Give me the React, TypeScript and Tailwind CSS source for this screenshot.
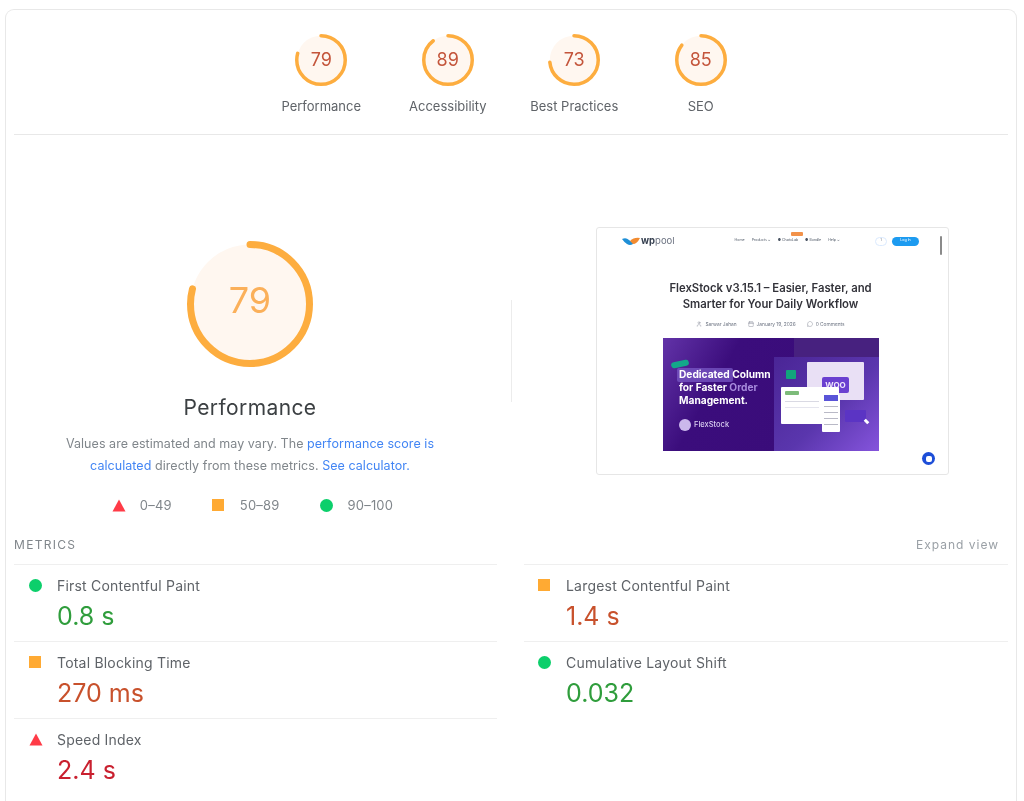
import React from 'react';
import { Calendar, MessageCircle, User } from 'lucide-react';

const scores = [
  { label: 'Performance', value: 79 },
  { label: 'Accessibility', value: 89 },
  { label: 'Best Practices', value: 73 },
  { label: 'SEO', value: 85 },
];

const leftMetrics = [
  { label: 'First Contentful Paint', value: '0.8 s', rating: 'good' },
  { label: 'Total Blocking Time', value: '270 ms', rating: 'average' },
  { label: 'Speed Index', value: '2.4 s', rating: 'poor' },
];

const rightMetrics = [
  { label: 'Largest Contentful Paint', value: '1.4 s', rating: 'average' },
  { label: 'Cumulative Layout Shift', value: '0.032', rating: 'good' },
];

function Gauge({ value, size, stroke }: { value: number; size: number; stroke: number }) {
  const r = (size - stroke) / 2;
  const c = 2 * Math.PI * r;
  return (
    <svg width={size} height={size} viewBox={`0 0 ${size} ${size}`} className="absolute inset-0 -rotate-90">
      <circle cx={size / 2} cy={size / 2} r={r} fill="#fff7f0" />
      <circle
        cx={size / 2}
        cy={size / 2}
        r={r}
        fill="none"
        stroke="#fdad3f"
        strokeWidth={stroke}
        strokeLinecap="round"
        strokeDasharray={`${(c * value) / 100} ${c}`}
      />
    </svg>
  );
}

function RatingIcon({ rating }: { rating: string }) {
  if (rating === 'good') return <span className="block h-[13px] w-[13px] rounded-full bg-[#0ccf6b]" />;
  if (rating === 'average') return <span className="block h-3 w-3 bg-[#ffaa33]" />;
  return (
    <svg width="14" height="13" viewBox="0 0 14 13" className="block">
      <path d="M7 0.5 L13.5 12.5 L0.5 12.5 Z" fill="#ff3b47" />
    </svg>
  );
}

function MetricRow({ label, value, rating, inset }: { label: string; value: string; rating: string; inset: string }) {
  const valueColor =
    rating === 'good' ? 'text-[#2f9d3c]' : rating === 'average' ? 'text-[#c8512c]' : 'text-[#c9202f]';
  return (
    <div className={`h-[77px] border-t border-[#efefef] ${inset}`}>
      <div className="flex h-[40px] items-center">
        <span className="flex w-[28px] shrink-0 items-center">
          <RatingIcon rating={rating} />
        </span>
        <span className="text-[14px] tracking-[0.2px] text-[#5f6368]">{label}</span>
      </div>
      <div className="pl-[28px]">
        <div className={`-mt-[4px] text-[25px] leading-[30px] ${valueColor}`}>{value}</div>
      </div>
    </div>
  );
}

function MiniPage() {
  return (
    <div className="relative h-[248px] w-[353px] overflow-hidden rounded-[3px] border border-[#e6e6e6] bg-white blur-[0.5px]">
      <div className="flex h-[26px] items-center pl-[25px] pr-[29px]">
        <svg width="18" height="9" viewBox="0 0 18 9">
          <path d="M0 2 Q4 0 7 3 Q10 6 13 2 L11 7 Q8 9 5 7 Q2 5 0 2Z" fill="#1f8fd6" />
          <path d="M8 4 Q12 0 18 1 Q15 7 11 7Z" fill="#f28b30" />
        </svg>
        <span className="ml-[1px] text-[9.5px] leading-[12px] font-bold text-[#374151]">
          wp<span className="font-normal text-[#6b7280]">pool</span>
        </span>
        <div className="ml-[60px] flex items-center gap-[7px] text-[3.6px] text-[#4b5563]">
          <span>Home</span>
          <span>Products ⌄</span>
          <span className="relative">
            ● ChatxLab
            <span className="absolute -top-[6px] left-[13px] h-[4px] w-[12px] rounded-[1px] bg-[#f2924a]" />
          </span>
          <span>● Bundle</span>
          <span>Help ⌄</span>
        </div>
        <span className="ml-auto mr-[5px] flex h-[9px] w-[12px] items-center justify-center rounded-full border border-[#dbeafe] text-[3.5px] text-[#6b7280]">
          1
        </span>
        <span className="flex h-[9px] w-[27px] items-center justify-center rounded-full bg-[#1d9bf0] text-[3.6px] text-white">
          Log In
        </span>
      </div>
      <div className="absolute right-[6px] top-[8px] h-[19px] w-[2px] rounded-full bg-[#8a8a8a]" />
      <div className="mt-[26px] pr-[4px] text-center text-[11.3px] leading-[16px] font-semibold text-[#33333a]">
        <div>FlexStock v3.15.1 – Easier, Faster, and</div>
        <div>Smarter for Your Daily Workflow</div>
      </div>
      <div className="mt-[8px] flex justify-center gap-[11px] pr-[4px] text-[4.8px] leading-[8px] text-[#6b7280]">
        <span className="flex items-center gap-[3px]">
          <User size={6} strokeWidth={1.5} />
          Sarwar Jahan
        </span>
        <span className="flex items-center gap-[3px]">
          <Calendar size={6} strokeWidth={1.5} />
          January 19, 2026
        </span>
        <span className="flex items-center gap-[3px]">
          <MessageCircle size={6} strokeWidth={1.5} />
          0 Comments
        </span>
      </div>
      <Banner />
      <div className="absolute bottom-[9px] right-[13px] flex h-[13px] w-[13px] items-center justify-center rounded-full bg-[#1d4ed8]">
        <span className="h-[6px] w-[6px] rounded-[2px] bg-white" />
      </div>
    </div>
  );
}

function Banner() {
  return (
    <div className="relative ml-[66px] mt-[10px] h-[113px] w-[216px] overflow-hidden bg-[linear-gradient(120deg,#6233a8_0%,#3b0d7c_28%,#390b78_100%)]">
      <div className="absolute right-0 top-0 h-[19px] w-[85px] bg-[#47217f]" />
      <div className="absolute bottom-0 right-0 h-[94px] w-[105px] bg-[linear-gradient(135deg,#4a2596_0%,#5a36ad_55%,#8554dc_100%)]" />

      <div className="absolute left-[14px] top-[30px] h-[14px] w-[56px] rounded-[2px] bg-[#7c5cc9]/70" />
      <div className="absolute left-[16px] top-[30px] text-[10.2px] leading-[13px] font-bold text-white">
        <div>Dedicated Column</div>
        <div>
          for Faster <span className="text-[#a78bdc]">Order</span>
        </div>
        <div>Management.</div>
      </div>
      <div className="absolute left-[8px] top-[23px] h-[6px] w-[18px] -rotate-12 rounded-full bg-[#13a88a]" />
      <div className="absolute left-[16px] top-[81px] flex items-center gap-[3px] text-[7.5px] font-medium text-[#d9cef0]">
        <span className="h-[12px] w-[12px] rounded-full bg-[#cbb8ec]" />
        FlexStock
      </div>

      <div className="absolute left-[144px] top-[24px] h-[38px] w-[57px] rounded-[1px] bg-[#e9e0f5]" />
      <div className="absolute left-[159px] top-[39px] flex h-[16px] w-[27px] items-center justify-center rounded-[2px] bg-[#6a3fd0] text-[8px] font-bold text-[#efe7fb]">
        WOO
      </div>
      <div className="absolute left-[123px] top-[32px] h-[9px] w-[10px] rounded-[1px] bg-[#12a47c]" />
      <div className="absolute left-[118px] top-[49px] h-[37px] w-[58px] rounded-[1px] bg-white p-[4px]">
        <div className="h-[4px] w-[14px] rounded-[1px] bg-[#7dbb7a]" />
        <div className="mt-[6px] h-[1px] w-[34px] bg-[#d9d9e3]" />
        <div className="mt-[5px] h-[1px] w-[34px] bg-[#e5e5ee]" />
      </div>
      <div className="absolute left-[159px] top-[57px] h-[37px] w-[18px] rounded-[1px] bg-white px-[2px]">
        <div className="h-[6px] bg-[#5a54d8]" />
        <div className="mt-[5px] h-[1px] bg-[#b9b9c6]" />
        <div className="mt-[5px] h-[1px] bg-[#b9b9c6]" />
        <div className="mt-[5px] h-[1px] bg-[#b9b9c6]" />
        <div className="mt-[5px] h-[1px] bg-[#b9b9c6]" />
      </div>
      <div className="absolute left-[182px] top-[72px] h-[12px] w-[21px] rounded-[1px] bg-[#5b34c4]" />
      <div className="absolute left-[202px] top-[81px] h-[5px] w-[3px] -rotate-45 bg-white" />
    </div>
  );
}

export default function App() {
  return (
    <div className="h-[801px] w-[1024px] overflow-hidden bg-white pl-[5px] pt-[9px] font-['Inter',sans-serif] blur-[0.3px]">
      <div className="h-[792px] w-[1012px] rounded-t-[9px] border border-b-0 border-[#e8e8e8] px-[8px]">
        <div className="flex justify-center border-b border-[#e8e8e8] pb-[19px] pt-[24px]">
          {scores.map((s) => (
            <div key={s.label} className="flex w-[126.5px] flex-col items-center">
              <div className="relative flex h-[52px] w-[52px] items-center justify-center">
                <Gauge value={s.value} size={52} stroke={3.5} />
                <span className="relative pb-[2px] text-[18px] text-[#c4553b]">{s.value}</span>
              </div>
              <span className="mt-[11px] text-[13px] leading-[18px] text-[#5f6368]">{s.label}</span>
            </div>
          ))}
        </div>

        <div className="flex h-[401px]">
          <div className="flex w-[472px] flex-col items-center pt-[106px]">
            <div className="relative flex h-[126px] w-[126px] items-center justify-center">
              <Gauge value={79} size={126} stroke={7} />
              <span className="relative pb-[8px] text-[36px] text-[#fbb05a]">79</span>
            </div>
            <div className="mt-[27px] text-[21px] leading-[28px] tracking-[0.4px] text-[#3c4043]">Performance</div>
            <div className="mt-[11px] text-center text-[12.5px] leading-[22px] tracking-[0.05px] text-[#80868b]">
              <div>
                Values are estimated and may vary. The <span className="text-[#4285f4]">performance score is</span>
              </div>
              <div>
                <span className="text-[#4285f4]">calculated</span> directly from these metrics.{' '}
                <span className="text-[#4285f4]">See calculator.</span>
              </div>
            </div>
            <div className="mt-[19px] flex items-center pl-[5px] text-[13px] leading-[18px] tracking-[0.2px] text-[#80868b]">
              <RatingIcon rating="poor" />
              <span className="ml-[14px]">0–49</span>
              <span className="ml-[40px]">
                <RatingIcon rating="average" />
              </span>
              <span className="ml-[16px]">50–89</span>
              <span className="ml-[40px]">
                <RatingIcon rating="good" />
              </span>
              <span className="ml-[15px]">90–100</span>
            </div>
          </div>
          <div className="ml-[25px] mt-[165px] h-[102px] w-px bg-[#ececec]" />
          <div className="ml-[84px] pt-[92px]">
            <MiniPage />
          </div>
        </div>

        <div className="flex h-[28px] items-start justify-between pr-[9px] text-[12px] leading-[18px] tracking-[1.3px] text-[#80868b]">
          <span>METRICS</span>
          <span className="tracking-[1px] text-[#9aa0a6]">Expand view</span>
        </div>

        <div className="flex justify-between">
          <div className="w-[483px]">
            {leftMetrics.map((m) => (
              <MetricRow key={m.label} {...m} inset="pl-[15px]" />
            ))}
          </div>
          <div className="w-[484px]">
            {rightMetrics.map((m) => (
              <MetricRow key={m.label} {...m} inset="pl-[14px]" />
            ))}
          </div>
        </div>
      </div>
    </div>
  );
}
